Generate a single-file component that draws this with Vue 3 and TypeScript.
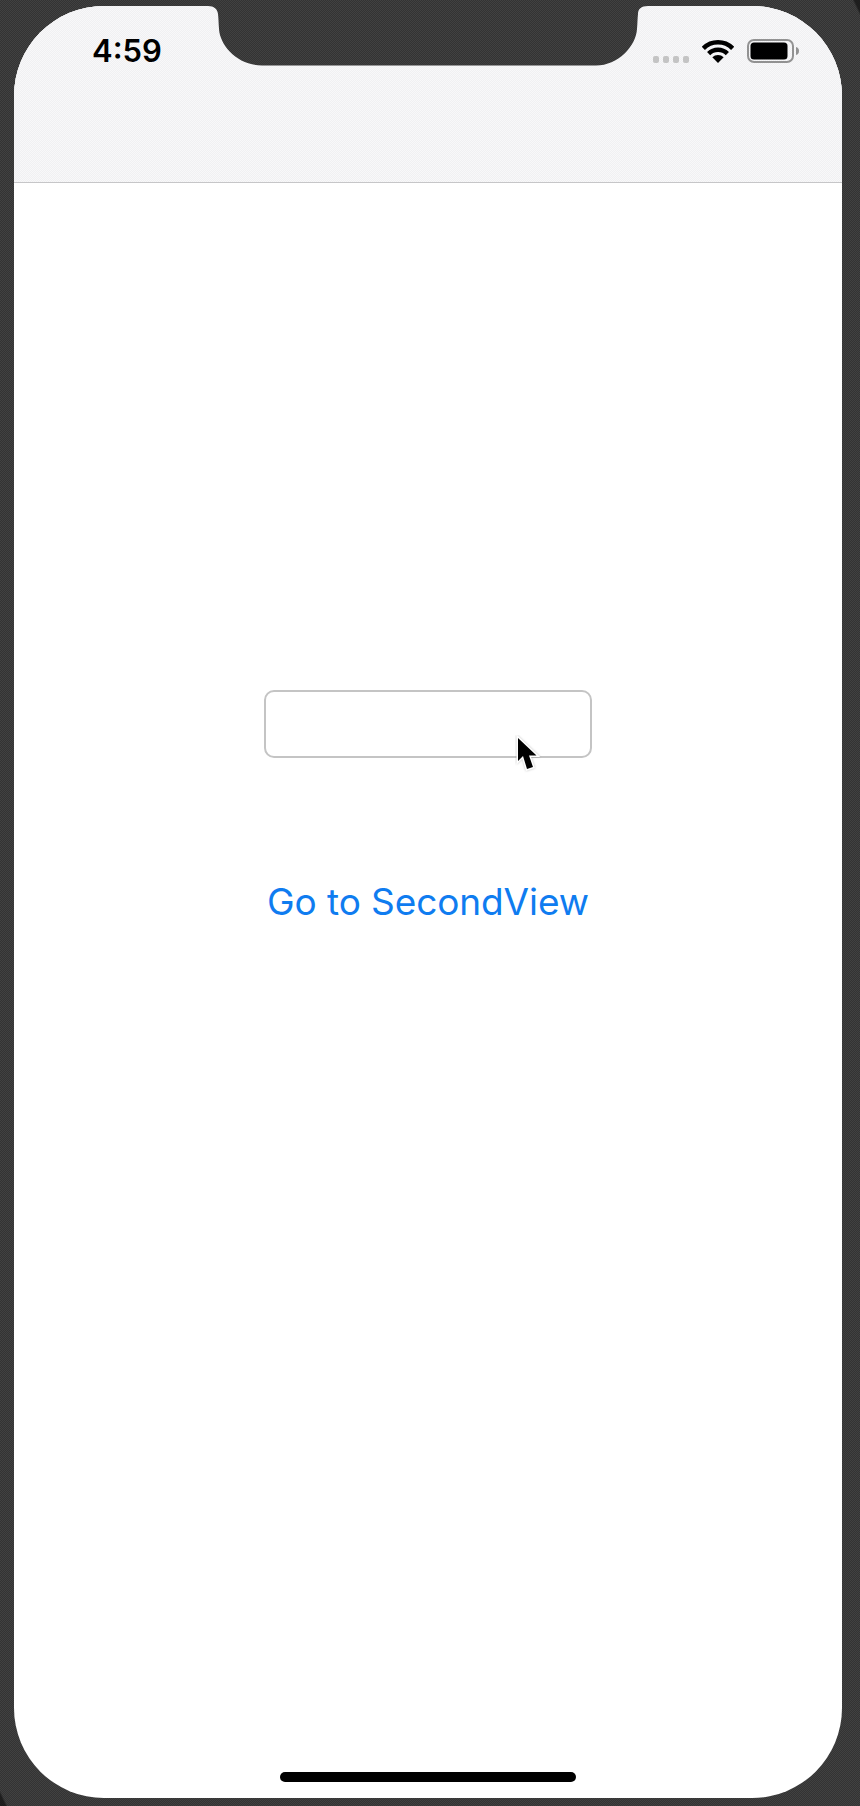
<script setup lang="ts">
const time: string = '4:59'
const signalDots: number[] = [1, 2, 3, 4]
</script>

<template>
  <div class="frame">
    <div class="screen">
      <header class="nav">
        <svg class="notch" width="440" height="60" viewBox="0 0 440 60" aria-hidden="true">
          <defs>
            <pattern id="dither" width="2" height="2" patternUnits="userSpaceOnUse">
              <rect width="2" height="2" fill="#333333" />
              <rect width="1" height="1" fill="#414141" />
              <rect x="1" y="1" width="1" height="1" fill="#414141" />
            </pattern>
          </defs>
          <path class="notch-shape" d="M0 0 H440 C433 0 430 3 430 8 C429.500 12 429.500 17 429 23 C428 40 410 59.500 388 59.500 H54 C30 59.500 12 40 11 23 C10.500 17 10.500 12 10 8 C9.500 3 6 0 0 0 Z" />
        </svg>
        <div class="status">
          <span class="time">{{ time }}</span>
          <div class="indicators">
            <div class="signal">
              <i v-for="d in signalDots" :key="d" class="dot"></i>
            </div>
            <svg class="wifi" width="32" height="24" viewBox="0 0 32 24" aria-hidden="true">
              <path class="arc" d="M1.33 9.33 A20.75 20.75 0 0 1 30.67 9.33" />
              <path class="arc" d="M6.63 14.63 A13.25 13.25 0 0 1 25.37 14.63" />
              <path class="wedge" d="M16 24 L10.34 18.34 A8 8 0 0 1 21.66 18.34 Z" />
            </svg>
            <svg class="battery" width="52" height="24" viewBox="0 0 52 24" aria-hidden="true">
              <rect class="shell" x="1" y="1" width="45" height="22" rx="6" />
              <rect class="charge" x="3.500" y="3.500" width="37" height="17" rx="3.500" />
              <path class="nub" d="M49 8 C51 8.500 52 10 52 12 C52 14 51 15.500 49 16 Z" />
            </svg>
          </div>
        </div>
      </header>

      <main class="content">
        <div class="field-wrap">
          <input class="field" type="text" aria-label="Text" />
          <svg class="cursor" width="28" height="38" viewBox="-3 -3 28 38" aria-hidden="true">
            <path class="cursor-shape" d="M0 0 L0 23 L5 18 L9 31 L15 29 L11 17.500 L18.500 17.500 Z" />
          </svg>
        </div>
        <a class="link" href="#">Go to SecondView</a>
      </main>

      <div class="home-wrap">
        <div class="home-bar"></div>
      </div>
    </div>
  </div>
</template>

<style>
html,
body {
  margin: 0;
  padding: 0;
}
</style>

<style scoped>
.frame {
  width: 860px;
  height: 1806px;
  box-sizing: border-box;
  padding: 6px 18px 8px 14px;
  background-color: #3a3a3a;
  background-image:
    linear-gradient(to top right, #1e1e1e 5px, transparent 7px),
    linear-gradient(to bottom left, #1e1e1e 5px, transparent 7px),
    repeating-conic-gradient(#333333 0 25%, #414141 0 50%);
  background-size: 100% 100%, 100% 100%, 2px 2px;
  overflow: hidden;
}

.screen {
  width: 828px;
  height: 1792px;
  border-radius: 90px;
  overflow: hidden;
  background: #ffffff;
  display: flex;
  flex-direction: column;
}

.nav {
  position: relative;
  height: 176px;
  flex: none;
  box-sizing: content-box;
  border-bottom: 1px solid #c6c6c8;
  background-color: #f4f4f6;
  background-image: repeating-conic-gradient(#f0f0f2 0 25%, #f8f8f9 0 50%);
  background-size: 2px 2px;
}

.notch {
  position: absolute;
  left: 194px;
  top: 0;
}

.notch-shape {
  fill: url(#dither);
}

.status {
  height: 70px;
  display: flex;
  justify-content: space-between;
  padding: 0 43px 0 78px;
}

.time {
  font-family: Inter, "Liberation Sans", sans-serif;
  font-weight: 600;
  font-size: 31px;
  line-height: 30px;
  margin-top: 30px;
  color: #000000;
}

.indicators {
  display: flex;
  align-items: flex-start;
  padding-top: 33px;
}

.signal {
  display: flex;
  gap: 4px;
  margin-top: 17px;
  margin-right: 13px;
}

.dot {
  display: block;
  width: 6px;
  height: 7px;
  border-radius: 2px;
  background: #c4c4c4;
}

.wifi {
  margin-right: 13px;
}

.arc {
  fill: none;
  stroke: #000000;
  stroke-width: 4.5;
}

.wedge {
  fill: #000000;
}

.shell {
  fill: none;
  stroke: #929292;
  stroke-width: 2;
}

.charge {
  fill: #000000;
}

.nub {
  fill: #929292;
}

.content {
  flex: 1;
  display: flex;
  flex-direction: column;
  align-items: center;
  padding-top: 507px;
}

.field-wrap {
  position: relative;
  width: 328px;
  height: 68px;
}

.field {
  display: block;
  width: 100%;
  height: 100%;
  box-sizing: border-box;
  border: 2px solid #c4c4c4;
  border-radius: 10px;
  background: #ffffff;
  outline: none;
  padding: 0 10px;
}

.cursor {
  position: absolute;
  left: 251px;
  top: 45px;
}

.cursor-shape {
  fill: #000000;
  stroke: #ffffff;
  stroke-width: 3;
  paint-order: stroke;
  filter: drop-shadow(0 0 1px rgba(0, 0, 0, 0.25));
}

.link {
  margin-top: 122px;
  font-family: Inter, "Liberation Sans", sans-serif;
  font-size: 37px;
  letter-spacing: -0.1px;
  line-height: 44px;
  color: #0f7cf0;
  text-decoration: none;
}

.home-wrap {
  flex: none;
  display: flex;
  justify-content: center;
  height: 26px;
}

.home-bar {
  width: 296px;
  height: 10px;
  border-radius: 5px;
  background: #000000;
}
</style>
